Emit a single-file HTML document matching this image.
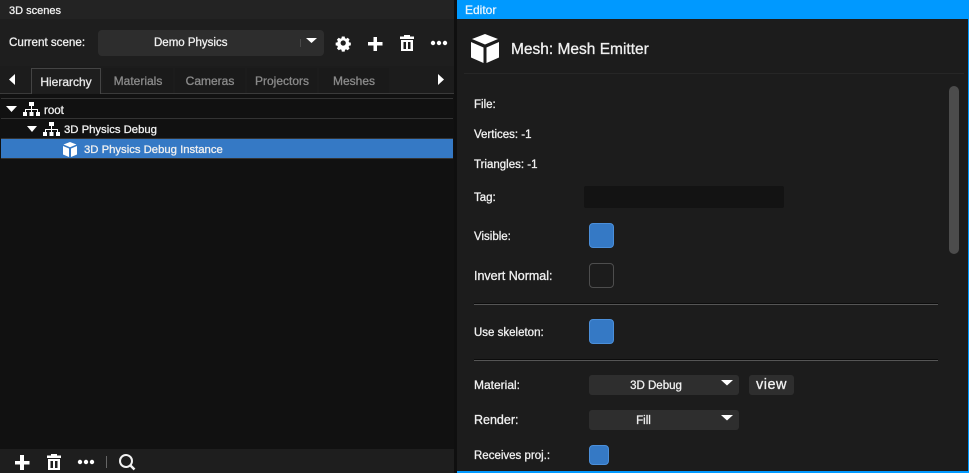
<!DOCTYPE html>
<html><head><meta charset="utf-8"><style>
html,body{margin:0;padding:0;background:#111}
body{width:969px;height:473px;overflow:hidden;position:relative;font-family:"Liberation Sans",sans-serif;font-size:11.5px;color:#f0f0f0;-webkit-text-stroke:.3px currentColor}
div{position:absolute;box-sizing:border-box}
.t{white-space:nowrap;line-height:14px}
.tab{top:68px;height:25px;background:#1a1a1a;color:#8a8a8a;text-align:center;line-height:27px;font-size:12px}
.hl{height:1px;background:#333}
.sep{left:474px;width:464px;height:1px;background:#555;box-shadow:0 -1px 0 #0c0c0c}
.dd{background:#2e2e2e;border-radius:3px;text-align:center}
.cb{background:#3579c5;border:1px solid #4b8fda;border-radius:4px}
svg{position:absolute;overflow:visible}
</style></head><body>
<div style="left:0;top:0;width:454px;height:19px;background:#232323"></div>
<div class="t" style="left:9px;top:4px;font-size:11px">3D scenes</div>
<div style="left:0;top:19px;width:454px;height:47px;background:#1e1e1e"></div>
<div style="left:0;top:66px;width:454px;height:28px;background:#1c1c1c"></div>
<div class="t" style="left:9px;top:36px;font-size:11.6px">Current scene:</div>
<div style="left:98px;top:30px;width:226px;height:26px;background:#2d2d2d;border-radius:4px"></div>
<div class="t" style="left:154px;top:36px;font-size:11.500px">Demo Physics</div>
<div style="left:300px;top:39px;width:1px;height:8px;background:#484848"></div>
<svg style="left:0;top:0" width="454" height="473">
<polygon points="306,38 317,38 311.500,43" fill="#fff"/>
<g fill="#fff">
<path fill-rule="evenodd" d="M341.500 35h3.500l.4 2.200 1.500.6 1.800-1.200 2.300 2.300-1.200 1.800.6 1.500 2.100.4v3.300l-2.100.4-.6 1.500 1.200 1.800-2.300 2.300-1.800-1.200-1.500.6-.4 2.200h-3.500l-.4-2.200-1.500-.6-1.800 1.200-2.300-2.300 1.200-1.800-.6-1.500-2.100-.4v-3.300l2.100-.4.6-1.500-1.200-1.800 2.300-2.300 1.800 1.200 1.500-.6zM343.200 39.800a3.200 3.200 0 1 0 0 6.400 3.200 3.200 0 1 0 0-6.400z" transform="translate(343.200,43) scale(.82) translate(-343.200,-43)"/>
<path d="M373.500 37h3.500v5h5.500v3.500H377V51h-3.500v-5.500H368V42h5.500z"/>
<path fill-rule="evenodd" d="M404 35h6v1.500h4V39h-14v-2.500h4zM401 40h12v11h-12zM403.500 42v7h2.500v-7zM408 42v7h2.500v-7z"/>
<circle cx="433" cy="43" r="2.200"/><circle cx="439" cy="43" r="2.200"/><circle cx="445" cy="43" r="2.200"/>
<polygon points="15,74 15,85 9,79.500"/>
<polygon points="438,74 438,85 444,79.500"/>
</g>
</svg>
<div class="tab" style="left:103px;width:70px">Materials</div>
<div class="tab" style="left:175px;width:70px">Cameras</div>
<div class="tab" style="left:247px;width:70px">Projectors</div>
<div class="tab" style="left:319px;width:70px">Meshes</div>
<div class="tab" style="left:31px;width:70px;height:26px;background:#1e1e1e;color:#e8e8e8;border:1px solid #444;border-bottom:none;line-height:26px">Hierarchy</div>
<div style="left:0;top:94px;width:454px;height:355px;background:#111"></div>
<div style="left:0;top:93px;width:31px;height:1px;background:#3a3a3a"></div>
<div style="left:101px;top:93px;width:353px;height:1px;background:#3a3a3a"></div>
<div class="hl" style="left:1px;top:98px;width:452px"></div>
<div class="hl" style="left:1px;top:118px;width:452px"></div>
<div class="hl" style="left:1px;top:138px;width:452px"></div>
<div style="left:1px;top:139px;width:452px;height:19px;background:#3579c5"></div>
<div class="hl" style="left:1px;top:158px;width:452px"></div>
<div class="t" style="left:44px;top:104px;font-size:11.500px">root</div>
<div class="t" style="left:64px;top:123px;font-size:11.300px">3D Physics Debug</div>
<div class="t" style="left:84px;top:143px;font-size:11.300px">3D Physics Debug Instance</div>
<div style="left:0;top:449px;width:454px;height:24px;background:#1e1e1e"></div>
<svg style="left:0;top:0" width="454" height="473" fill="#fff">
<polygon points="6,106 17,106 11.500,112"/>
<polygon points="27,126 37,126 32,132"/>
<g><rect x="29" y="102" width="5" height="4"/><rect x="31" y="106" width="1" height="4"/><rect x="25" y="109" width="13" height="1"/><rect x="25" y="109" width="1" height="4"/><rect x="31" y="109" width="1" height="4"/><rect x="37" y="109" width="1" height="4"/><rect x="23" y="112" width="4" height="4"/><rect x="29.500" y="112" width="4" height="4"/><rect x="36" y="112" width="4" height="4"/></g>
<g transform="translate(20,20)"><rect x="29" y="102" width="5" height="4"/><rect x="31" y="106" width="1" height="4"/><rect x="25" y="109" width="13" height="1"/><rect x="25" y="109" width="1" height="4"/><rect x="31" y="109" width="1" height="4"/><rect x="37" y="109" width="1" height="4"/><rect x="23" y="112" width="4" height="4"/><rect x="29.500" y="112" width="4" height="4"/><rect x="36" y="112" width="4" height="4"/></g>
<path d="M70 142l6.500 2.500-6.500 2.700-6.500-2.700zM63 146l6 2.500V157l-6-2.500zM77 146l-6 2.500V157l6-2.500z"/>
<path d="M20 455h4v6h5.500v3.500H24v5.500h-4v-5.500h-5V461h5z"/>
<path fill-rule="evenodd" d="M51 454h6v1.500h4V458H47v-2.500h4zM48 459h12v11H48zM50.500 461v7H53v-7zM55 461v7h2.500v-7z"/>
<circle cx="80" cy="462" r="2.200"/><circle cx="86" cy="462" r="2.200"/><circle cx="92" cy="462" r="2.200"/>
</svg>
<div style="left:106px;top:456px;width:1px;height:12px;background:#666"></div>
<svg style="left:0;top:0" width="454" height="473" fill="none" stroke="#f2f2f2"><circle cx="126" cy="461" r="6" stroke-width="2"/><path d="M130.500 465.500l4 4" stroke-width="2.500"/></svg>

<div style="left:454px;top:0;width:3px;height:473px;background:#0f0f0f"></div>
<div style="left:457px;top:0;width:512px;height:473px;background:#1c1c1c;border-right:1px solid #0099ff;border-bottom:2px solid #0099ff"></div>
<div style="left:457px;top:0;width:512px;height:19px;background:#0099ff"></div>
<div class="t" style="left:465px;top:3px;color:#e8f4ff;font-size:12px">Editor</div>
<svg style="left:0;top:0" width="969" height="473" fill="#fff">
<path d="M485 34l13 5-13 5.500-13-5.500zM471 42l12.500 5.500V63L471 57.500zM499 42l-12.500 5.500V63l12.500-5.500z"/>
</svg>
<div class="t" style="left:511px;top:43px;font-size:15.500px">Mesh: Mesh Emitter</div>
<div class="hl" style="left:464px;top:73px;width:500px;background:#262626"></div>
<div class="t" style="left:474px;top:98px">File:</div>
<div class="t" style="left:474px;top:128px">Vertices: -1</div>
<div class="t" style="left:474px;top:158px">Triangles: -1</div>
<div class="t" style="left:474px;top:191px">Tag:</div>
<div style="left:584px;top:186px;width:200px;height:22px;background:#131313;border-radius:2px"></div>
<div class="t" style="left:474px;top:230px">Visible:</div>
<div class="cb" style="left:589px;top:223px;width:25px;height:25px"></div>
<div class="t" style="left:474px;top:269px;font-size:12.500px">Invert Normal:</div>
<div style="left:589px;top:263px;width:25px;height:25px;border:1px solid #4d4d4d;border-radius:4px"></div>
<div style="left:949px;top:86px;width:10px;height:168px;background:#4c4c4c;border-radius:5px"></div>
<div class="sep" style="top:304px"></div>
<div class="t" style="left:474px;top:326px">Use skeleton:</div>
<div class="cb" style="left:589px;top:319px;width:25px;height:25px"></div>
<div class="sep" style="top:360px"></div>
<div class="t" style="left:474px;top:378px;font-size:12px">Material:</div>
<div class="dd t" style="left:589px;top:375px;width:150px;height:20px;line-height:22px;padding-right:16px">3D Debug</div>
<div class="dd" style="left:749px;top:375px;width:45px;height:20px;line-height:20px;font-size:14.500px;letter-spacing:.5px">view</div>
<div class="t" style="left:474px;top:413px;font-size:12.500px">Render:</div>
<div class="dd t" style="left:589px;top:410px;width:150px;height:20px;line-height:22px;padding-right:41px">Fill</div>
<svg style="left:0;top:0" width="969" height="473" fill="#fff">
<polygon points="721,380 733,380 727,385.500"/><polygon points="721,415 733,415 727,420.500"/>
</svg>
<div class="t" style="left:474px;top:449px">Receives proj.:</div>
<div class="cb" style="left:589px;top:445px;width:20px;height:20px"></div>
</body></html>
